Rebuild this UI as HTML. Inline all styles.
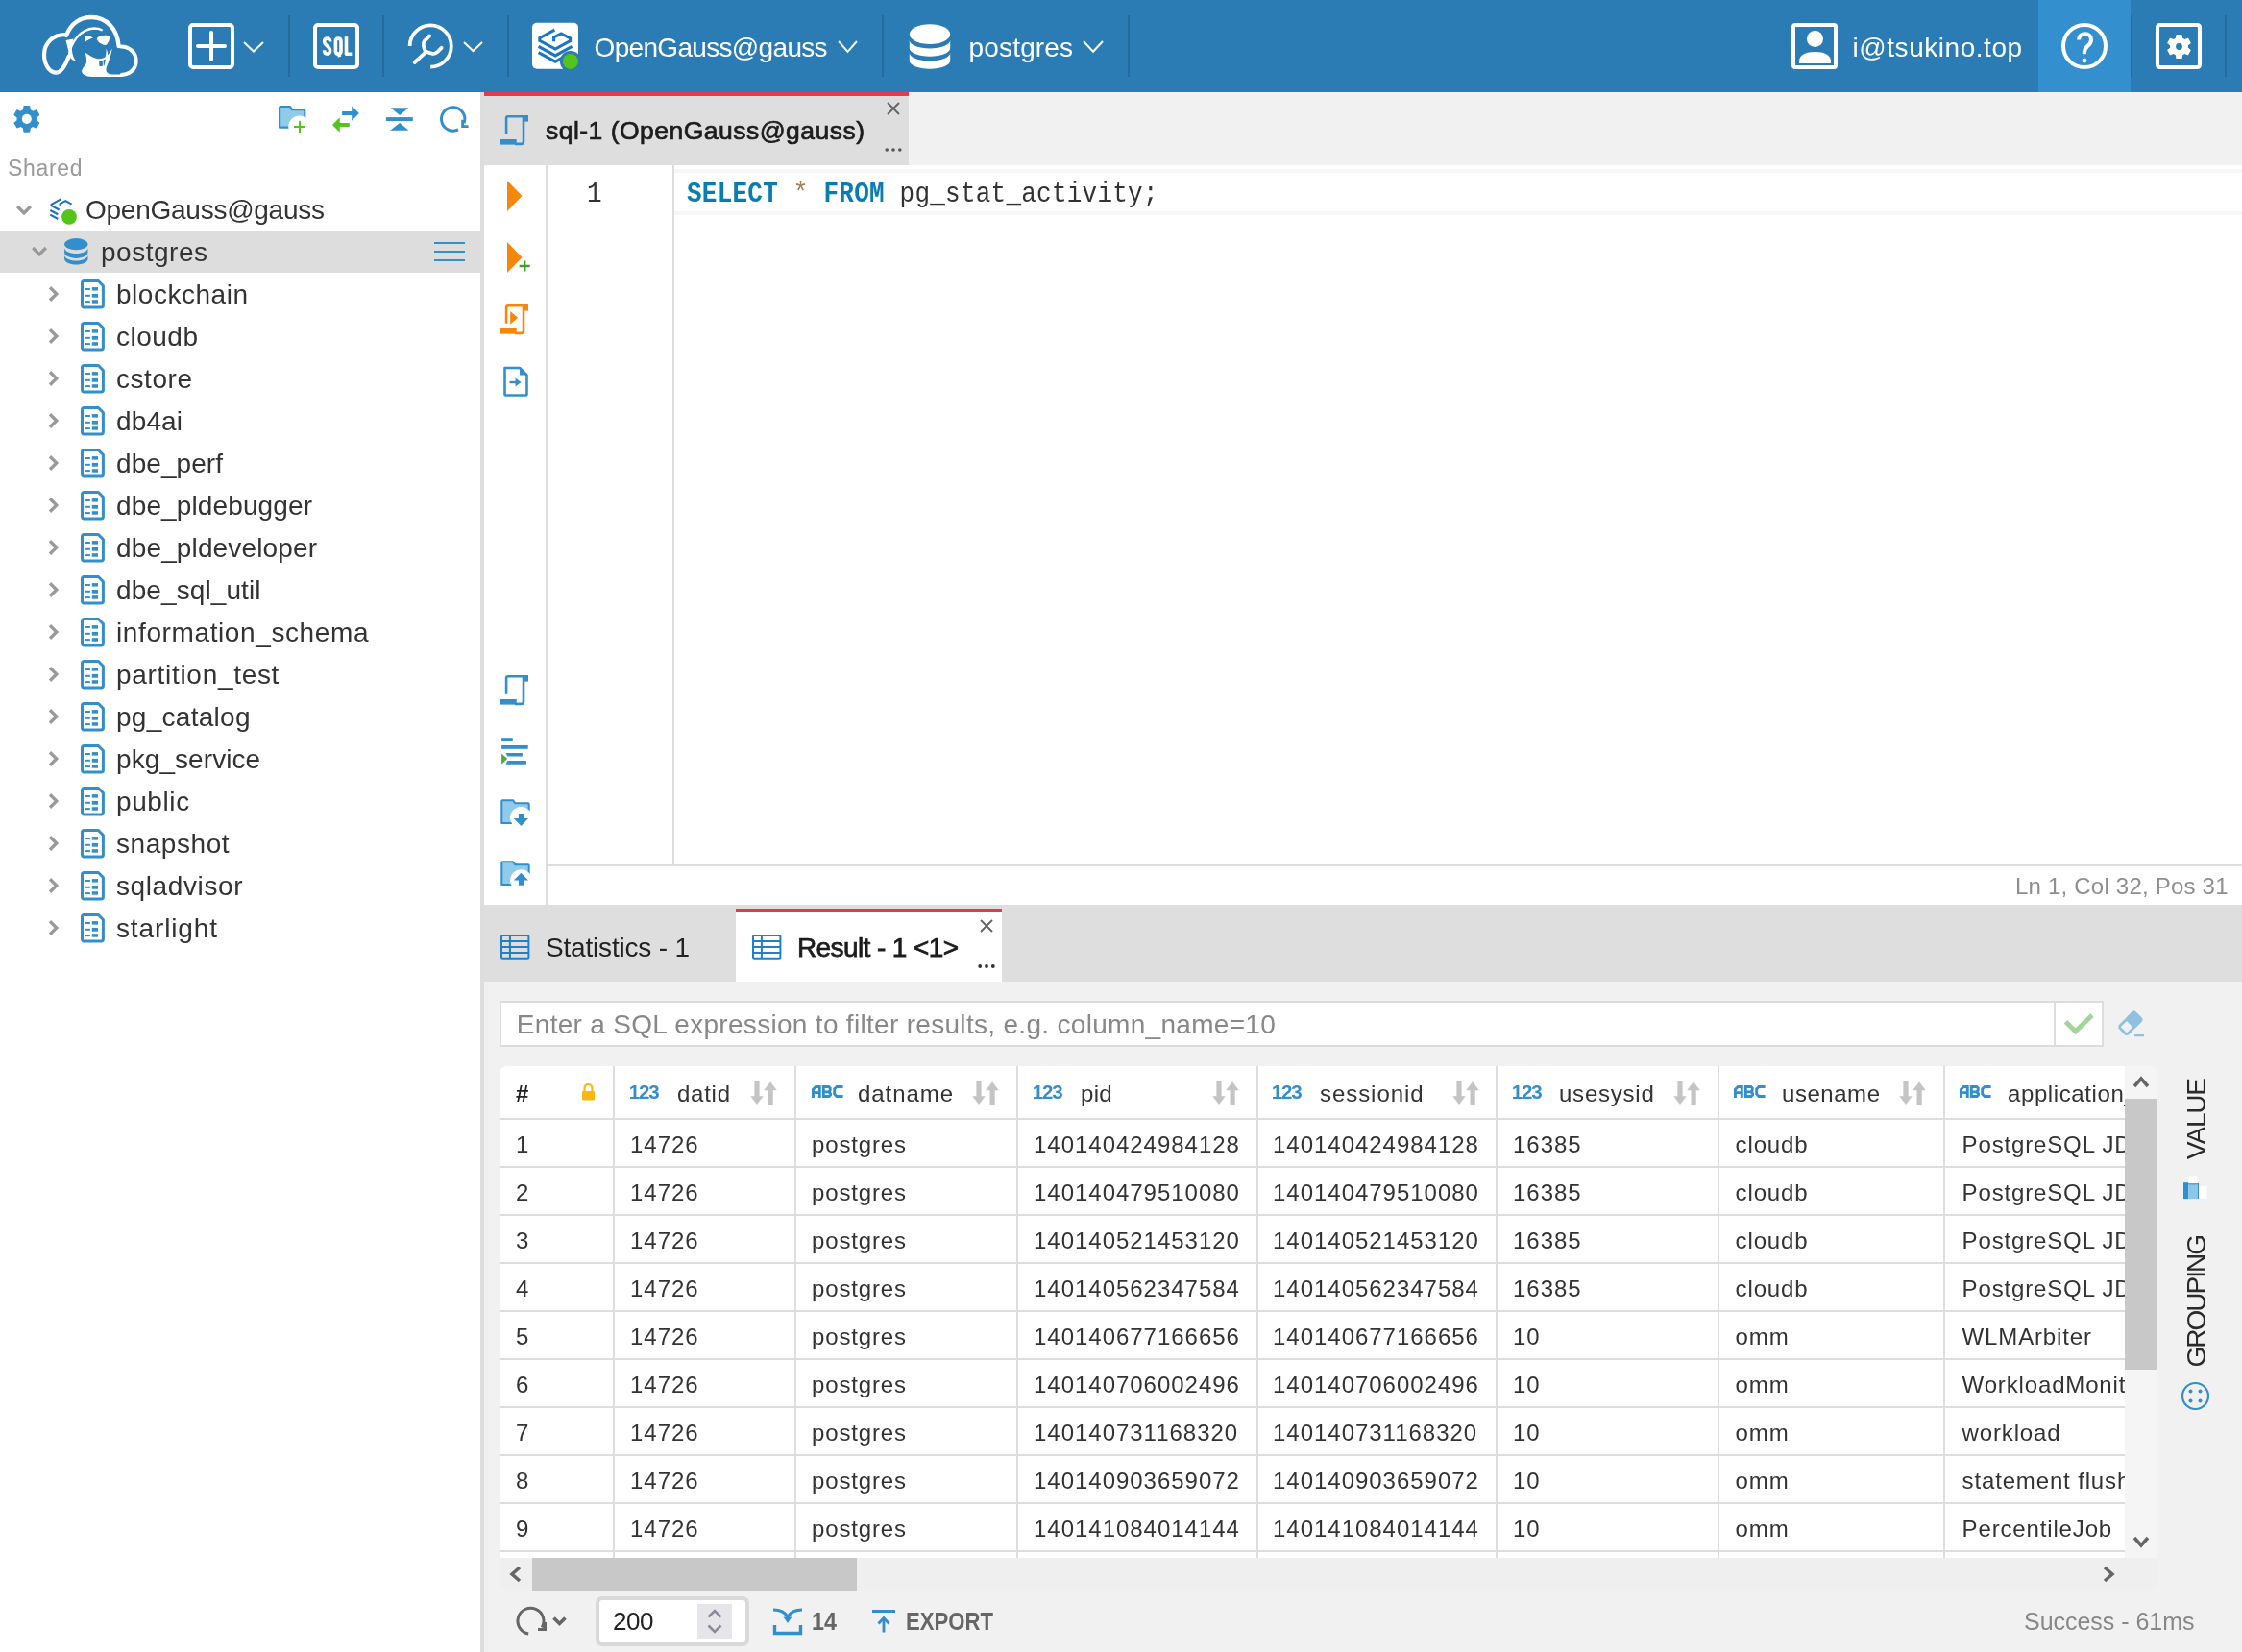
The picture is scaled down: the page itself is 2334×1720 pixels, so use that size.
<!DOCTYPE html>
<html><head><meta charset="utf-8"><style>
html,body{margin:0;padding:0;}
body{width:2334px;height:1720px;position:relative;overflow:hidden;background:#fff;font-family:"Liberation Sans",sans-serif;}
.a{position:absolute;}
.t{position:absolute;white-space:pre;line-height:1;}
.layer{position:absolute;left:0;top:0;width:2334px;height:1720px;will-change:transform;}
svg.a{overflow:visible;}
</style></head><body>
<div class="a" style="left:0px;top:0px;width:2334px;height:96px;background:#2b7bb5;"></div>
<div class="a" style="left:2122px;top:0px;width:96px;height:96px;background:#338fcd;"></div>
<div class="a" style="left:300px;top:16px;width:2px;height:64px;background:#236a9e;"></div>
<div class="a" style="left:398px;top:16px;width:2px;height:64px;background:#236a9e;"></div>
<div class="a" style="left:528px;top:16px;width:2px;height:64px;background:#236a9e;"></div>
<div class="a" style="left:918px;top:16px;width:2px;height:64px;background:#236a9e;"></div>
<div class="a" style="left:1174px;top:16px;width:2px;height:64px;background:#236a9e;"></div>
<div class="a" style="left:2218px;top:16px;width:2px;height:64px;background:#236a9e;"></div>
<div class="a" style="left:2316px;top:16px;width:2px;height:64px;background:#236a9e;"></div>
<svg class="a" style="left:40px;top:12px;" width="110" height="72" viewBox="40 12 110 72">
<g fill="none" stroke="#ffffff" stroke-linecap="round">
<path d="M 69 37 C 74 24, 84 18, 95.4 18 C 110 18, 122 29, 123.6 48" stroke-width="4.3"/>
<path d="M 68 36.2 C 55 36, 46 45, 46 57 C 46 68, 52 75.6, 58.6 75.6 C 64 75.6, 68 68, 71.5 59" stroke-width="4.2"/>
<path d="M 126 48.5 C 135 48.5, 141.7 55, 141.7 63.5 C 141.7 72, 135 77.7, 127 77.7" stroke-width="4"/>
<path d="M 71.5 60 C 73 44, 84 30, 98 29.5 C 101 29.5, 104 30, 105.8 31.2" stroke-width="2.4"/>
</g>
<g fill="#ffffff">
<path d="M 68.5 42 L 76.5 40.6 C 74 48, 74 58, 79.5 64 C 75 63, 72 60, 71.8 55 Z"/>
<path d="M 100.8 40 C 103 36.5, 110 36.4, 114.6 37.3 C 114.5 41, 112 47, 109.5 47 C 105 46.5, 101 43, 100.8 40 Z"/>
<path d="M 88.3 38 C 90 36.5, 93 37, 97 39.6 C 94 40.5, 91 42, 88.3 44 Z"/>
<path d="M 88 54.2 C 95 59, 100 61.5, 104 61.2 C 110 60.5, 113.5 57, 116.8 50.5 C 115 60, 112 67, 110.5 71 C 110 76, 113 77.5, 118 77.5 L 128 77.5 L 128 80 L 96 80 C 89 80, 84.6 77, 85.2 73.5 C 85.5 71, 89 68, 90 65.5 C 90.5 61, 89.5 57, 88 54.2 Z"/>
</g>
<path d="M 110.5 50.8 C 111.8 53, 112.4 56, 112 58.5 C 111.5 60, 110.5 61, 109 61.5 C 110.3 58, 110.8 54, 110.5 50.8 Z" fill="#ffffff"/>
<g fill="#2b7bb5"><path d="M 103.2 63 L 106.8 63 L 106.8 68.5 C 106 69.5, 104 69.5, 103.4 68.5 Z"/><path d="M 107.5 62.5 L 110 61.5 L 108.5 68.5 L 107.8 68.5 Z"/></g>
</svg>
<svg class="a" style="left:196px;top:24px;" width="48" height="48" viewBox="0 0 48 48"><rect x="2" y="2" width="44" height="44" rx="3" fill="none" stroke="#ffffff" stroke-width="4"/>
<path d="M 10 24 L 38 24 M 24 10 L 24 38" stroke="#ffffff" stroke-width="4" stroke-linecap="round"/></svg>
<svg class="a" style="left:252px;top:41.8px;" width="24" height="13.5" viewBox="0 0 24 13.5"><path d="M 2 2 L 12.0 11.5 L 22 2" fill="none" stroke="#ffffff" stroke-width="2"/></svg>
<svg class="a" style="left:326px;top:24px;" width="48" height="48" viewBox="0 0 48 48"><rect x="2" y="2" width="44" height="44" rx="3" fill="none" stroke="#ffffff" stroke-width="4"/></svg>
<svg class="a" style="left:326px;top:24px;" width="48" height="48" viewBox="0 0 48 48"><g fill="none" stroke="#ffffff" stroke-width="3.6" stroke-linecap="butt" stroke-linejoin="round">
<path d="M 17.6 19.5 L 17.6 18.8 C 17.6 17, 16.4 16.1, 14.6 16.1 C 12.8 16.1, 11.6 17.1, 11.6 19 C 11.6 21.6, 13 22.6, 14.8 24 C 16.6 25.5, 17.6 26.6, 17.6 29.1 C 17.6 31, 16.4 32.1, 14.6 32.1 C 12.8 32.1, 11.6 31.2, 11.6 29.2 L 11.6 28.2"/>
<path d="M 26.2 16.1 C 24.5 16.1, 23.4 17.2, 23.4 19 L 23.4 29.2 C 23.4 31, 24.5 32.1, 26.2 32.1 C 27.9 32.1, 29 31, 29 29.2 L 29 19 C 29 17.2, 27.9 16.1, 26.2 16.1 Z"/>
<path d="M 26.3 31 L 27.6 35.3"/>
<path d="M 34.5 14.2 L 34.5 32.2 L 40.3 32.2"/>
</g></svg>
<svg class="a" style="left:424px;top:24px;" width="48" height="48" viewBox="0 0 48 48"><path d="M 2.6 24 A 21.6 21.6 0 1 1 24.2 45.6" fill="none" stroke="#ffffff" stroke-width="3.8"/>
<path d="M 7.6 41 L 18.4 31.2 M 23.2 13.4 L 17.8 18.8 C 16.8 20, 16.5 21.5, 16.9 23.5 C 17.3 26, 17.8 28, 19 29.5 C 21 30.5, 24 31.3, 26.5 31.8 C 28.3 32, 30 31.5, 31.5 30 L 35.6 25.8" fill="none" stroke="#ffffff" stroke-width="3.8" stroke-linecap="round" stroke-linejoin="round"/></svg>
<svg class="a" style="left:480.5px;top:41.8px;" width="23.0" height="13.0" viewBox="0 0 23.0 13.0"><path d="M 2 2 L 11.5 11.0 L 21.0 2" fill="none" stroke="#ffffff" stroke-width="2"/></svg>
<svg class="a" style="left:554px;top:23px;" width="49" height="50" viewBox="0 0 49 50"><rect x="0" y="0.8" width="48" height="48" rx="5" fill="#ffffff"/>
<g fill="none" stroke="#1b76c6" stroke-width="3.1" stroke-linejoin="miter">
<path d="M 23.4 8.2 L 7.8 16.6 L 7.8 19.3 L 24.1 28 L 39.6 19.5 L 39.6 16.9 L 30.2 11.9 L 22.6 16 L 22.6 20.3"/>
<path d="M 6.6 25.4 L 24.1 34.9 L 41.5 25.4"/>
<path d="M 6.6 31.7 L 24.1 41.2 L 41.5 31.7"/>
</g>
<circle cx="39.9" cy="40.9" r="11" fill="#2b7bb5"/><circle cx="39.9" cy="40.9" r="8" fill="#52c41a"/></svg>
<svg class="a" style="left:871px;top:41.2px;" width="23" height="14.799999999999997" viewBox="0 0 23 14.799999999999997"><path d="M 2 2 L 11.5 12.799999999999997 L 21 2" fill="none" stroke="#ffffff" stroke-width="2"/></svg>
<svg class="a" style="left:945px;top:24px;" width="46" height="50" viewBox="0 0 46 50"><g fill="#ffffff">
<ellipse cx="23" cy="11.65" rx="21.2" ry="10.35"/>
<path d="M 1.8 18 C 1.8 22.69, 11.29 26.5, 23 26.5 C 34.71 26.5, 44.2 22.69, 44.2 18 L 44.2 26.3 C 44.2 30.99, 34.71 34.8, 23 34.8 C 11.29 34.8, 1.8 30.99, 1.8 26.3 Z"/>
<path d="M 1.8 31 C 1.8 35.69, 11.29 39.5, 23 39.5 C 34.71 39.5, 44.2 35.69, 44.2 31 L 44.2 39.3 C 44.2 43.99, 34.71 47.8, 23 47.8 C 11.29 47.8, 1.8 43.99, 1.8 39.3 Z"/>
</g></svg>
<svg class="a" style="left:1126px;top:41.2px;" width="24" height="14.799999999999997" viewBox="0 0 24 14.799999999999997"><path d="M 2 2 L 12.0 12.799999999999997 L 22 2" fill="none" stroke="#ffffff" stroke-width="2"/></svg>
<svg class="a" style="left:1865px;top:24px;" width="49" height="48" viewBox="0 0 49 48"><rect x="2" y="2" width="44" height="44" rx="2" fill="none" stroke="#ffffff" stroke-width="4"/>
<circle cx="24.5" cy="16.5" r="8.5" fill="#ffffff"/>
<path d="M 8 42 L 8 40 C 8 33, 15 30, 24.5 30 C 34 30, 41 33, 41 40 L 41 42 Z" fill="#ffffff"/></svg>
<svg class="a" style="left:2146px;top:24px;" width="49" height="48" viewBox="0 0 49 48"><circle cx="24" cy="24" r="22" fill="none" stroke="#ffffff" stroke-width="4"/>
<path d="M 18.1 17.6 C 18.1 13.8, 20.8 11.3, 24.6 11.3 C 28.3 11.3, 31 13.8, 31 17.4 C 31 20.6, 29 22.2, 27.2 24 C 25.3 25.8, 23.9 27.5, 23.9 30.5 L 23.9 32.2" fill="none" stroke="#ffffff" stroke-width="4.1"/>
<circle cx="23.9" cy="39" r="2.4" fill="#ffffff"/></svg>
<svg class="a" style="left:2244px;top:24px;" width="49" height="49" viewBox="0 0 49 49"><rect x="2" y="2" width="44" height="44" rx="2.5" fill="none" stroke="#ffffff" stroke-width="4.1"/>
<g transform="translate(8.75 8.75) scale(1.3125)"><path d="M19.14,12.94c0.04-0.3,0.06-0.61,0.06-0.94c0-0.32-0.02-0.64-0.07-0.94l2.03-1.58c0.18-0.14,0.23-0.41,0.12-0.61 l-1.92-3.32c-0.12-0.22-0.37-0.29-0.59-0.22l-2.39,0.96c-0.5-0.38-1.03-0.7-1.62-0.94L14.4,2.81c-0.04-0.24-0.24-0.41-0.48-0.41 h-3.84c-0.24,0-0.43,0.17-0.47,0.41L9.25,5.35C8.66,5.59,8.12,5.92,7.630,6.29L5.24,5.33c-0.22-0.08-0.47,0-0.59,0.22L2.74,8.87 C2.62,9.08,2.66,9.34,2.86,9.48l2.03,1.58C4.84,11.36,4.8,11.690,4.8,12s0.02,0.64,0.07,0.94l-2.03,1.58 c-0.18,0.14-0.23,0.41-0.12,0.61l1.92,3.32c0.12,0.22,0.37,0.29,0.59,0.22l2.39-0.96c0.5,0.38,1.03,0.7,1.62,0.94l0.36,2.54 c0.05,0.24,0.24,0.41,0.48,0.41h3.84c0.24,0,0.44-0.17,0.47-0.41l0.36-2.54c0.59-0.24,1.13-0.56,1.62-0.94l2.39,0.96 c0.22,0.08,0.47,0,0.59-0.22l1.92-3.32c0.12-0.22,0.07-0.47-0.12-0.61L19.14,12.94z" fill="#ffffff"/><circle cx="12" cy="12" r="2.6" fill="#2b7bb5"/></g></svg>
<div class="a" style="left:500px;top:96px;width:4px;height:1624px;background:#dddddd;"></div>
<svg class="a" style="left:8px;top:104px;" width="40" height="40" viewBox="0 0 40 40"><g transform="translate(2.6 2.6) scale(1.4375)"><path d="M19.14,12.94c0.04-0.3,0.06-0.61,0.06-0.94c0-0.32-0.02-0.64-0.07-0.94l2.03-1.58c0.18-0.14,0.23-0.41,0.12-0.61 l-1.92-3.32c-0.12-0.22-0.37-0.29-0.59-0.22l-2.39,0.96c-0.5-0.38-1.03-0.7-1.62-0.94L14.4,2.81c-0.04-0.24-0.24-0.41-0.48-0.41 h-3.84c-0.24,0-0.43,0.17-0.47,0.41L9.25,5.35C8.66,5.59,8.12,5.92,7.630,6.29L5.24,5.33c-0.22-0.08-0.47,0-0.59,0.22L2.74,8.87 C2.62,9.08,2.66,9.34,2.86,9.48l2.03,1.58C4.84,11.36,4.8,11.690,4.8,12s0.02,0.64,0.07,0.94l-2.03,1.58 c-0.18,0.14-0.23,0.41-0.12,0.61l1.92,3.32c0.12,0.22,0.37,0.29,0.59,0.22l2.39-0.96c0.5,0.38,1.03,0.7,1.62,0.94l0.36,2.54 c0.05,0.24,0.24,0.41,0.48,0.41h3.84c0.24,0,0.44-0.17,0.47-0.41l0.36-2.54c0.59-0.24,1.13-0.56,1.62-0.94l2.39,0.96 c0.22,0.08,0.47,0,0.59-0.22l1.92-3.32c0.12-0.22,0.07-0.47-0.12-0.61L19.14,12.94z" fill="#338ecc"/><circle cx="12" cy="12" r="3.5" fill="#fff"/></g></svg>
<svg class="a" style="left:289px;top:110px;" width="32" height="30" viewBox="0 0 32 30"><path d="M 2.1 2 C 2.1 1.4, 2.5 1, 3.1 1 L 13 1 L 15 4.2 L 27.3 4.2 C 27.8 4.2, 28.3 4.6, 28.3 5.2 L 28.3 22.7 L 2.1 22.7 Z" fill="#8fcbeb" stroke="#338ecc" stroke-width="2.2" stroke-linejoin="round"/>
<circle cx="22.8" cy="22" r="11.5" fill="#fff"/>
<path d="M 23 16 L 23 28 M 17 22 L 29 22" stroke="#52c41a" stroke-width="2"/></svg>
<svg class="a" style="left:345px;top:110px;" width="30" height="30" viewBox="0 0 30 30"><path d="M 11.1 6 L 21.7 6 L 21.7 9.9 L 11.1 9.9 Z M 21.2 0.3 L 28.9 8 L 21.2 15.7 Z" fill="#338ecc"/>
<path d="M 8.2 18 L 18.8 18 L 18.8 22 L 8.2 22 Z M 1 20 L 8.7 12.3 L 8.7 27.7 Z" fill="#52c41a"/></svg>
<svg class="a" style="left:401px;top:111px;" width="30" height="26" viewBox="0 0 30 26"><path d="M 5.7 1.2 L 24.5 1.2 L 15.1 8.9 Z M 5.2 24.8 L 24.5 24.8 L 15.1 16.9 Z" fill="#338ecc"/><rect x="0.9" y="11.1" width="27.9" height="3.9" fill="#338ecc"/></svg>
<svg class="a" style="left:457px;top:110px;" width="32" height="30" viewBox="0 0 32 30"><path d="M 20.05 24.97 A 12.2 12.2 0 1 1 26.16 18.17" fill="none" stroke="#338ecc" stroke-width="3"/><path d="M 24.6 14.7 L 24.6 21.7 L 30.6 21.7" fill="none" stroke="#338ecc" stroke-width="2.8"/></svg>
<svg class="a" style="left:15.5px;top:212px;" width="18" height="14" viewBox="0 0 18 14"><path d="M 2.2 3 L 9 9.8 L 15.8 3" fill="none" stroke="#999" stroke-width="3.3"/></svg>
<svg class="a" style="left:51px;top:205px;" width="30" height="30" viewBox="0 0 30 30"><g fill="none" stroke="#1d72c2" stroke-width="2.1" stroke-linejoin="miter">
<path d="M 12.4 2.3 L 2.5 7.8 L 2.5 9.2 L 10.6 13.5"/><path d="M 11.6 10 L 11.6 7.2 L 17.3 4.1 L 23.6 7.6"/>
<path d="M 1.3 14 L 9.4 18.3"/><path d="M 1.3 18.7 L 9.3 23"/></g>
<circle cx="21" cy="20.9" r="7.9" fill="#52c41a"/></svg>
<div class="a" style="left:0px;top:240px;width:500px;height:44px;background:#dddddd;"></div>
<svg class="a" style="left:31.5px;top:255px;" width="18" height="14" viewBox="0 0 18 14"><path d="M 2.2 3 L 9 9.8 L 15.8 3" fill="none" stroke="#999" stroke-width="3.3"/></svg>
<svg class="a" style="left:66.5px;top:247.5px;" width="25" height="28" viewBox="0 0 25 28"><g fill="#338ecc">
<ellipse cx="12.3" cy="6.2" rx="12.2" ry="6.1"/>
<path d="M 0.10000000000000142 10 C 0.10000000000000142 13.37, 5.56 16.1, 12.3 16.1 C 19.04 16.1, 24.5 13.37, 24.5 10 L 24.5 14.8 C 24.5 18.17, 19.04 20.9, 12.3 20.9 C 5.56 20.9, 0.10000000000000142 18.17, 0.10000000000000142 14.8 Z"/>
<path d="M 0.10000000000000142 17.5 C 0.10000000000000142 20.87, 5.56 23.6, 12.3 23.6 C 19.04 23.6, 24.5 20.87, 24.5 17.5 L 24.5 21.5 C 24.5 24.87, 19.04 27.6, 12.3 27.6 C 5.56 27.6, 0.10000000000000142 24.87, 0.10000000000000142 21.5 Z"/>
</g></svg>
<svg class="a" style="left:452px;top:251px;" width="33" height="22" viewBox="0 0 33 22"><path d="M 0 2 L 32 2 M 0 11 L 32 11 M 0 20 L 32 20" stroke="#338ecc" stroke-width="2.2"/></svg>
<svg class="a" style="left:50px;top:296.5px;" width="12" height="18" viewBox="0 0 12 18"><path d="M 2 2.3 L 8.8 9 L 2 15.7" fill="none" stroke="#999" stroke-width="3.3"/></svg>
<svg class="a" style="left:84px;top:291px;" width="26" height="31" viewBox="0 0 26 31"><path d="M 3.4 1.5 L 18.4 1.5 L 23.4 6.5 L 23.4 27 C 23.4 28.1, 22.6 28.9, 21.5 28.9 L 3.4 28.9 C 2.3 28.9, 1.5 28.1, 1.5 27 L 1.5 3.4 C 1.5 2.3, 2.3 1.5, 3.4 1.5 Z" fill="none" stroke="#338ecc" stroke-width="3" stroke-linejoin="round"/>
<g fill="#338ecc"><rect x="5" y="9" width="4.9" height="2"/><rect x="11.8" y="8.1" width="6.2" height="3.5"/>
<rect x="5" y="15.8" width="4.9" height="2"/><rect x="11.8" y="14.9" width="6.2" height="3.8"/>
<rect x="5" y="22.1" width="4.9" height="2"/><rect x="11.8" y="21.2" width="6.2" height="3.5"/></g></svg>
<svg class="a" style="left:50px;top:340.5px;" width="12" height="18" viewBox="0 0 12 18"><path d="M 2 2.3 L 8.8 9 L 2 15.7" fill="none" stroke="#999" stroke-width="3.3"/></svg>
<svg class="a" style="left:84px;top:335px;" width="26" height="31" viewBox="0 0 26 31"><path d="M 3.4 1.5 L 18.4 1.5 L 23.4 6.5 L 23.4 27 C 23.4 28.1, 22.6 28.9, 21.5 28.9 L 3.4 28.9 C 2.3 28.9, 1.5 28.1, 1.5 27 L 1.5 3.4 C 1.5 2.3, 2.3 1.5, 3.4 1.5 Z" fill="none" stroke="#338ecc" stroke-width="3" stroke-linejoin="round"/>
<g fill="#338ecc"><rect x="5" y="9" width="4.9" height="2"/><rect x="11.8" y="8.1" width="6.2" height="3.5"/>
<rect x="5" y="15.8" width="4.9" height="2"/><rect x="11.8" y="14.9" width="6.2" height="3.8"/>
<rect x="5" y="22.1" width="4.9" height="2"/><rect x="11.8" y="21.2" width="6.2" height="3.5"/></g></svg>
<svg class="a" style="left:50px;top:384.5px;" width="12" height="18" viewBox="0 0 12 18"><path d="M 2 2.3 L 8.8 9 L 2 15.7" fill="none" stroke="#999" stroke-width="3.3"/></svg>
<svg class="a" style="left:84px;top:379px;" width="26" height="31" viewBox="0 0 26 31"><path d="M 3.4 1.5 L 18.4 1.5 L 23.4 6.5 L 23.4 27 C 23.4 28.1, 22.6 28.9, 21.5 28.9 L 3.4 28.9 C 2.3 28.9, 1.5 28.1, 1.5 27 L 1.5 3.4 C 1.5 2.3, 2.3 1.5, 3.4 1.5 Z" fill="none" stroke="#338ecc" stroke-width="3" stroke-linejoin="round"/>
<g fill="#338ecc"><rect x="5" y="9" width="4.9" height="2"/><rect x="11.8" y="8.1" width="6.2" height="3.5"/>
<rect x="5" y="15.8" width="4.9" height="2"/><rect x="11.8" y="14.9" width="6.2" height="3.8"/>
<rect x="5" y="22.1" width="4.9" height="2"/><rect x="11.8" y="21.2" width="6.2" height="3.5"/></g></svg>
<svg class="a" style="left:50px;top:428.5px;" width="12" height="18" viewBox="0 0 12 18"><path d="M 2 2.3 L 8.8 9 L 2 15.7" fill="none" stroke="#999" stroke-width="3.3"/></svg>
<svg class="a" style="left:84px;top:423px;" width="26" height="31" viewBox="0 0 26 31"><path d="M 3.4 1.5 L 18.4 1.5 L 23.4 6.5 L 23.4 27 C 23.4 28.1, 22.6 28.9, 21.5 28.9 L 3.4 28.9 C 2.3 28.9, 1.5 28.1, 1.5 27 L 1.5 3.4 C 1.5 2.3, 2.3 1.5, 3.4 1.5 Z" fill="none" stroke="#338ecc" stroke-width="3" stroke-linejoin="round"/>
<g fill="#338ecc"><rect x="5" y="9" width="4.9" height="2"/><rect x="11.8" y="8.1" width="6.2" height="3.5"/>
<rect x="5" y="15.8" width="4.9" height="2"/><rect x="11.8" y="14.9" width="6.2" height="3.8"/>
<rect x="5" y="22.1" width="4.9" height="2"/><rect x="11.8" y="21.2" width="6.2" height="3.5"/></g></svg>
<svg class="a" style="left:50px;top:472.5px;" width="12" height="18" viewBox="0 0 12 18"><path d="M 2 2.3 L 8.8 9 L 2 15.7" fill="none" stroke="#999" stroke-width="3.3"/></svg>
<svg class="a" style="left:84px;top:467px;" width="26" height="31" viewBox="0 0 26 31"><path d="M 3.4 1.5 L 18.4 1.5 L 23.4 6.5 L 23.4 27 C 23.4 28.1, 22.6 28.9, 21.5 28.9 L 3.4 28.9 C 2.3 28.9, 1.5 28.1, 1.5 27 L 1.5 3.4 C 1.5 2.3, 2.3 1.5, 3.4 1.5 Z" fill="none" stroke="#338ecc" stroke-width="3" stroke-linejoin="round"/>
<g fill="#338ecc"><rect x="5" y="9" width="4.9" height="2"/><rect x="11.8" y="8.1" width="6.2" height="3.5"/>
<rect x="5" y="15.8" width="4.9" height="2"/><rect x="11.8" y="14.9" width="6.2" height="3.8"/>
<rect x="5" y="22.1" width="4.9" height="2"/><rect x="11.8" y="21.2" width="6.2" height="3.5"/></g></svg>
<svg class="a" style="left:50px;top:516.5px;" width="12" height="18" viewBox="0 0 12 18"><path d="M 2 2.3 L 8.8 9 L 2 15.7" fill="none" stroke="#999" stroke-width="3.3"/></svg>
<svg class="a" style="left:84px;top:511px;" width="26" height="31" viewBox="0 0 26 31"><path d="M 3.4 1.5 L 18.4 1.5 L 23.4 6.5 L 23.4 27 C 23.4 28.1, 22.6 28.9, 21.5 28.9 L 3.4 28.9 C 2.3 28.9, 1.5 28.1, 1.5 27 L 1.5 3.4 C 1.5 2.3, 2.3 1.5, 3.4 1.5 Z" fill="none" stroke="#338ecc" stroke-width="3" stroke-linejoin="round"/>
<g fill="#338ecc"><rect x="5" y="9" width="4.9" height="2"/><rect x="11.8" y="8.1" width="6.2" height="3.5"/>
<rect x="5" y="15.8" width="4.9" height="2"/><rect x="11.8" y="14.9" width="6.2" height="3.8"/>
<rect x="5" y="22.1" width="4.9" height="2"/><rect x="11.8" y="21.2" width="6.2" height="3.5"/></g></svg>
<svg class="a" style="left:50px;top:560.5px;" width="12" height="18" viewBox="0 0 12 18"><path d="M 2 2.3 L 8.8 9 L 2 15.7" fill="none" stroke="#999" stroke-width="3.3"/></svg>
<svg class="a" style="left:84px;top:555px;" width="26" height="31" viewBox="0 0 26 31"><path d="M 3.4 1.5 L 18.4 1.5 L 23.4 6.5 L 23.4 27 C 23.4 28.1, 22.6 28.9, 21.5 28.9 L 3.4 28.9 C 2.3 28.9, 1.5 28.1, 1.5 27 L 1.5 3.4 C 1.5 2.3, 2.3 1.5, 3.4 1.5 Z" fill="none" stroke="#338ecc" stroke-width="3" stroke-linejoin="round"/>
<g fill="#338ecc"><rect x="5" y="9" width="4.9" height="2"/><rect x="11.8" y="8.1" width="6.2" height="3.5"/>
<rect x="5" y="15.8" width="4.9" height="2"/><rect x="11.8" y="14.9" width="6.2" height="3.8"/>
<rect x="5" y="22.1" width="4.9" height="2"/><rect x="11.8" y="21.2" width="6.2" height="3.5"/></g></svg>
<svg class="a" style="left:50px;top:604.5px;" width="12" height="18" viewBox="0 0 12 18"><path d="M 2 2.3 L 8.8 9 L 2 15.7" fill="none" stroke="#999" stroke-width="3.3"/></svg>
<svg class="a" style="left:84px;top:599px;" width="26" height="31" viewBox="0 0 26 31"><path d="M 3.4 1.5 L 18.4 1.5 L 23.4 6.5 L 23.4 27 C 23.4 28.1, 22.6 28.9, 21.5 28.9 L 3.4 28.9 C 2.3 28.9, 1.5 28.1, 1.5 27 L 1.5 3.4 C 1.5 2.3, 2.3 1.5, 3.4 1.5 Z" fill="none" stroke="#338ecc" stroke-width="3" stroke-linejoin="round"/>
<g fill="#338ecc"><rect x="5" y="9" width="4.9" height="2"/><rect x="11.8" y="8.1" width="6.2" height="3.5"/>
<rect x="5" y="15.8" width="4.9" height="2"/><rect x="11.8" y="14.9" width="6.2" height="3.8"/>
<rect x="5" y="22.1" width="4.9" height="2"/><rect x="11.8" y="21.2" width="6.2" height="3.5"/></g></svg>
<svg class="a" style="left:50px;top:648.5px;" width="12" height="18" viewBox="0 0 12 18"><path d="M 2 2.3 L 8.8 9 L 2 15.7" fill="none" stroke="#999" stroke-width="3.3"/></svg>
<svg class="a" style="left:84px;top:643px;" width="26" height="31" viewBox="0 0 26 31"><path d="M 3.4 1.5 L 18.4 1.5 L 23.4 6.5 L 23.4 27 C 23.4 28.1, 22.6 28.9, 21.5 28.9 L 3.4 28.9 C 2.3 28.9, 1.5 28.1, 1.5 27 L 1.5 3.4 C 1.5 2.3, 2.3 1.5, 3.4 1.5 Z" fill="none" stroke="#338ecc" stroke-width="3" stroke-linejoin="round"/>
<g fill="#338ecc"><rect x="5" y="9" width="4.9" height="2"/><rect x="11.8" y="8.1" width="6.2" height="3.5"/>
<rect x="5" y="15.8" width="4.9" height="2"/><rect x="11.8" y="14.9" width="6.2" height="3.8"/>
<rect x="5" y="22.1" width="4.9" height="2"/><rect x="11.8" y="21.2" width="6.2" height="3.5"/></g></svg>
<svg class="a" style="left:50px;top:692.5px;" width="12" height="18" viewBox="0 0 12 18"><path d="M 2 2.3 L 8.8 9 L 2 15.7" fill="none" stroke="#999" stroke-width="3.3"/></svg>
<svg class="a" style="left:84px;top:687px;" width="26" height="31" viewBox="0 0 26 31"><path d="M 3.4 1.5 L 18.4 1.5 L 23.4 6.5 L 23.4 27 C 23.4 28.1, 22.6 28.9, 21.5 28.9 L 3.4 28.9 C 2.3 28.9, 1.5 28.1, 1.5 27 L 1.5 3.4 C 1.5 2.3, 2.3 1.5, 3.4 1.5 Z" fill="none" stroke="#338ecc" stroke-width="3" stroke-linejoin="round"/>
<g fill="#338ecc"><rect x="5" y="9" width="4.9" height="2"/><rect x="11.8" y="8.1" width="6.2" height="3.5"/>
<rect x="5" y="15.8" width="4.9" height="2"/><rect x="11.8" y="14.9" width="6.2" height="3.8"/>
<rect x="5" y="22.1" width="4.9" height="2"/><rect x="11.8" y="21.2" width="6.2" height="3.5"/></g></svg>
<svg class="a" style="left:50px;top:736.5px;" width="12" height="18" viewBox="0 0 12 18"><path d="M 2 2.3 L 8.8 9 L 2 15.7" fill="none" stroke="#999" stroke-width="3.3"/></svg>
<svg class="a" style="left:84px;top:731px;" width="26" height="31" viewBox="0 0 26 31"><path d="M 3.4 1.5 L 18.4 1.5 L 23.4 6.5 L 23.4 27 C 23.4 28.1, 22.6 28.9, 21.5 28.9 L 3.4 28.9 C 2.3 28.9, 1.5 28.1, 1.5 27 L 1.5 3.4 C 1.5 2.3, 2.3 1.5, 3.4 1.5 Z" fill="none" stroke="#338ecc" stroke-width="3" stroke-linejoin="round"/>
<g fill="#338ecc"><rect x="5" y="9" width="4.9" height="2"/><rect x="11.8" y="8.1" width="6.2" height="3.5"/>
<rect x="5" y="15.8" width="4.9" height="2"/><rect x="11.8" y="14.9" width="6.2" height="3.8"/>
<rect x="5" y="22.1" width="4.9" height="2"/><rect x="11.8" y="21.2" width="6.2" height="3.5"/></g></svg>
<svg class="a" style="left:50px;top:780.5px;" width="12" height="18" viewBox="0 0 12 18"><path d="M 2 2.3 L 8.8 9 L 2 15.7" fill="none" stroke="#999" stroke-width="3.3"/></svg>
<svg class="a" style="left:84px;top:775px;" width="26" height="31" viewBox="0 0 26 31"><path d="M 3.4 1.5 L 18.4 1.5 L 23.4 6.5 L 23.4 27 C 23.4 28.1, 22.6 28.9, 21.5 28.9 L 3.4 28.9 C 2.3 28.9, 1.5 28.1, 1.5 27 L 1.5 3.4 C 1.5 2.3, 2.3 1.5, 3.4 1.5 Z" fill="none" stroke="#338ecc" stroke-width="3" stroke-linejoin="round"/>
<g fill="#338ecc"><rect x="5" y="9" width="4.9" height="2"/><rect x="11.8" y="8.1" width="6.2" height="3.5"/>
<rect x="5" y="15.8" width="4.9" height="2"/><rect x="11.8" y="14.9" width="6.2" height="3.8"/>
<rect x="5" y="22.1" width="4.9" height="2"/><rect x="11.8" y="21.2" width="6.2" height="3.5"/></g></svg>
<svg class="a" style="left:50px;top:824.5px;" width="12" height="18" viewBox="0 0 12 18"><path d="M 2 2.3 L 8.8 9 L 2 15.7" fill="none" stroke="#999" stroke-width="3.3"/></svg>
<svg class="a" style="left:84px;top:819px;" width="26" height="31" viewBox="0 0 26 31"><path d="M 3.4 1.5 L 18.4 1.5 L 23.4 6.5 L 23.4 27 C 23.4 28.1, 22.6 28.9, 21.5 28.9 L 3.4 28.9 C 2.3 28.9, 1.5 28.1, 1.5 27 L 1.5 3.4 C 1.5 2.3, 2.3 1.5, 3.4 1.5 Z" fill="none" stroke="#338ecc" stroke-width="3" stroke-linejoin="round"/>
<g fill="#338ecc"><rect x="5" y="9" width="4.9" height="2"/><rect x="11.8" y="8.1" width="6.2" height="3.5"/>
<rect x="5" y="15.8" width="4.9" height="2"/><rect x="11.8" y="14.9" width="6.2" height="3.8"/>
<rect x="5" y="22.1" width="4.9" height="2"/><rect x="11.8" y="21.2" width="6.2" height="3.5"/></g></svg>
<svg class="a" style="left:50px;top:868.5px;" width="12" height="18" viewBox="0 0 12 18"><path d="M 2 2.3 L 8.8 9 L 2 15.7" fill="none" stroke="#999" stroke-width="3.3"/></svg>
<svg class="a" style="left:84px;top:863px;" width="26" height="31" viewBox="0 0 26 31"><path d="M 3.4 1.5 L 18.4 1.5 L 23.4 6.5 L 23.4 27 C 23.4 28.1, 22.6 28.9, 21.5 28.9 L 3.4 28.9 C 2.3 28.9, 1.5 28.1, 1.5 27 L 1.5 3.4 C 1.5 2.3, 2.3 1.5, 3.4 1.5 Z" fill="none" stroke="#338ecc" stroke-width="3" stroke-linejoin="round"/>
<g fill="#338ecc"><rect x="5" y="9" width="4.9" height="2"/><rect x="11.8" y="8.1" width="6.2" height="3.5"/>
<rect x="5" y="15.8" width="4.9" height="2"/><rect x="11.8" y="14.9" width="6.2" height="3.8"/>
<rect x="5" y="22.1" width="4.9" height="2"/><rect x="11.8" y="21.2" width="6.2" height="3.5"/></g></svg>
<svg class="a" style="left:50px;top:912.5px;" width="12" height="18" viewBox="0 0 12 18"><path d="M 2 2.3 L 8.8 9 L 2 15.7" fill="none" stroke="#999" stroke-width="3.3"/></svg>
<svg class="a" style="left:84px;top:907px;" width="26" height="31" viewBox="0 0 26 31"><path d="M 3.4 1.5 L 18.4 1.5 L 23.4 6.5 L 23.4 27 C 23.4 28.1, 22.6 28.9, 21.5 28.9 L 3.4 28.9 C 2.3 28.9, 1.5 28.1, 1.5 27 L 1.5 3.4 C 1.5 2.3, 2.3 1.5, 3.4 1.5 Z" fill="none" stroke="#338ecc" stroke-width="3" stroke-linejoin="round"/>
<g fill="#338ecc"><rect x="5" y="9" width="4.9" height="2"/><rect x="11.8" y="8.1" width="6.2" height="3.5"/>
<rect x="5" y="15.8" width="4.9" height="2"/><rect x="11.8" y="14.9" width="6.2" height="3.8"/>
<rect x="5" y="22.1" width="4.9" height="2"/><rect x="11.8" y="21.2" width="6.2" height="3.5"/></g></svg>
<svg class="a" style="left:50px;top:956.5px;" width="12" height="18" viewBox="0 0 12 18"><path d="M 2 2.3 L 8.8 9 L 2 15.7" fill="none" stroke="#999" stroke-width="3.3"/></svg>
<svg class="a" style="left:84px;top:951px;" width="26" height="31" viewBox="0 0 26 31"><path d="M 3.4 1.5 L 18.4 1.5 L 23.4 6.5 L 23.4 27 C 23.4 28.1, 22.6 28.9, 21.5 28.9 L 3.4 28.9 C 2.3 28.9, 1.5 28.1, 1.5 27 L 1.5 3.4 C 1.5 2.3, 2.3 1.5, 3.4 1.5 Z" fill="none" stroke="#338ecc" stroke-width="3" stroke-linejoin="round"/>
<g fill="#338ecc"><rect x="5" y="9" width="4.9" height="2"/><rect x="11.8" y="8.1" width="6.2" height="3.5"/>
<rect x="5" y="15.8" width="4.9" height="2"/><rect x="11.8" y="14.9" width="6.2" height="3.8"/>
<rect x="5" y="22.1" width="4.9" height="2"/><rect x="11.8" y="21.2" width="6.2" height="3.5"/></g></svg>
<div class="a" style="left:504px;top:96px;width:1830px;height:76px;background:#f1f1f1;"></div>
<div class="a" style="left:504px;top:96px;width:442px;height:4px;background:#e6394f;"></div>
<div class="a" style="left:504px;top:100px;width:442px;height:72px;background:#dedede;"></div>
<svg class="a" style="left:520px;top:119px;" width="31" height="32" viewBox="0 0 31 32"><path d="M 7.1 20.7 L 7.1 4 C 7.1 2.9, 7.9 2.2, 9 2.2 L 25 2.2 L 25 28.6 C 25 29.9, 24 30.9, 22.7 30.9 L 16 30.9" fill="none" stroke="#338ecc" stroke-width="2.6" stroke-linejoin="round"/>
<rect x="24" y="1" width="6" height="6.6" fill="#338ecc"/><rect x="0.3" y="26" width="17.4" height="5.6" fill="#338ecc"/></svg>
<svg class="a" style="left:922px;top:105px;" width="16" height="16" viewBox="0 0 16 16"><path d="M 2 2 L 14 14 M 14 2 L 2 14" stroke="#666" stroke-width="2"/></svg>
<svg class="a" style="left:921px;top:154px;" width="18" height="4" viewBox="0 0 18 4"><g fill="#555"><circle cx="2.2" cy="2" r="1.8"/><circle cx="9" cy="2" r="1.8"/><circle cx="15.8" cy="2" r="1.8"/></g></svg>
<div class="a" style="left:504px;top:172px;width:1830px;height:770px;background:#ffffff;"></div>
<div class="a" style="left:568px;top:172px;width:2px;height:770px;background:#dddddd;"></div>
<div class="a" style="left:700px;top:172px;width:2px;height:729px;background:#dddddd;"></div>
<div class="a" style="left:569px;top:900px;width:1765px;height:2px;background:#dddddd;"></div>
<div class="a" style="left:702px;top:176px;width:1632px;height:4px;background:#f7f7f7;"></div>
<div class="a" style="left:702px;top:220px;width:1632px;height:4px;background:#f7f7f7;"></div>
<svg class="a" style="left:527px;top:187px;" width="18" height="34" viewBox="0 0 18 34"><path d="M 1 1 L 16.5 17 L 1 33 Z" fill="#f5870a"/></svg>
<svg class="a" style="left:527px;top:251px;" width="28" height="34" viewBox="0 0 28 34"><path d="M 1 1 L 16.5 17 L 1 33 Z" fill="#f5870a"/><path d="M 19.2 20.5 L 19.2 31.5 M 13.7 26 L 24.7 26" stroke="#3fa02b" stroke-width="2.4"/></svg>
<svg class="a" style="left:520px;top:316px;" width="31" height="32" viewBox="0 0 31 32"><path d="M 7.1 20.7 L 7.1 4 C 7.1 2.9, 7.9 2.2, 9 2.2 L 25 2.2 L 25 28.6 C 25 29.9, 24 30.9, 22.7 30.9 L 16 30.9" fill="none" stroke="#f5870a" stroke-width="2.6" stroke-linejoin="round"/>
<rect x="24" y="1" width="6" height="6.6" fill="#f5870a"/><rect x="0.3" y="26" width="17.4" height="5.6" fill="#f5870a"/><path d="M 11.2 8 L 19.1 14.8 L 11.2 21.7 Z" fill="#f5870a"/></svg>
<svg class="a" style="left:524px;top:381px;" width="26" height="32" viewBox="0 0 26 32"><path d="M 1.5 2 L 17 2 L 24.5 9.5 L 24.5 29.5 C 24.5 30, 24 30.5, 23.5 30.5 L 2.5 30.5 C 2 30.5, 1.5 30, 1.5 29.5 Z" fill="none" stroke="#338ecc" stroke-width="2.6" stroke-linejoin="round"/>
<path d="M 17 2 L 17 9.5 L 24.5 9.5 Z" fill="#338ecc"/>
<path d="M 6.5 17 L 14 17" stroke="#338ecc" stroke-width="2.4"/><path d="M 12.5 12.5 L 18.5 17 L 12.5 21.5 Z" fill="#338ecc"/></svg>
<svg class="a" style="left:520px;top:702px;" width="31" height="32" viewBox="0 0 31 32"><path d="M 7.1 20.7 L 7.1 4 C 7.1 2.9, 7.9 2.2, 9 2.2 L 25 2.2 L 25 28.6 C 25 29.9, 24 30.9, 22.7 30.9 L 16 30.9" fill="none" stroke="#338ecc" stroke-width="2.6" stroke-linejoin="round"/>
<rect x="24" y="1" width="6" height="6.6" fill="#338ecc"/><rect x="0.3" y="26" width="17.4" height="5.6" fill="#338ecc"/></svg>
<svg class="a" style="left:521px;top:768px;" width="30" height="30" viewBox="0 0 30 30"><g fill="#338ecc"><rect x="1.1" y="0.2" width="11.7" height="3.5"/><rect x="1.1" y="8" width="27.6" height="3.8"/>
<path d="M 5.5 16.1 L 22.9 16.1 L 22.9 19.6 L 7.5 19.6 Z"/><path d="M 7.5 24 L 26.9 24 L 26.9 27.8 L 5.5 27.8 Z"/></g>
<path d="M 1.1 16.4 L 7.2 22 L 1.1 27.8 Z" fill="#4bab34"/></svg>
<svg class="a" style="left:521px;top:832px;" width="31" height="30" viewBox="0 0 31 30"><path d="M 1.3 2 C 1.3 1.4, 1.7 1.2, 2.2 1.2 L 13 1.2 L 15.2 4.2 L 28.8 4.2 C 29.3 4.2, 29.7 4.6, 29.7 5.1 L 29.7 24.9 L 1.3 24.9 Z" fill="#8fcbeb" stroke="#338ecc" stroke-width="2" stroke-linejoin="round"/>
<circle cx="21.5" cy="19.3" r="11.4" fill="#fff"/><path d="M 18.9 14.9 L 24 14.9 L 24 20.2 L 18.9 20.2 Z M 13.8 20 L 29 20 L 21.5 28 Z" fill="#338ecc"/></svg>
<svg class="a" style="left:521px;top:896px;" width="31" height="30" viewBox="0 0 31 30"><path d="M 1.3 2 C 1.3 1.4, 1.7 1.2, 2.2 1.2 L 13 1.2 L 15.2 4.2 L 28.8 4.2 C 29.3 4.2, 29.7 4.6, 29.7 5.1 L 29.7 24.9 L 1.3 24.9 Z" fill="#8fcbeb" stroke="#338ecc" stroke-width="2" stroke-linejoin="round"/>
<circle cx="21.5" cy="20.6" r="11.4" fill="#fff"/><path d="M 18.9 20.6 L 24 20.6 L 24 25.7 L 18.9 25.7 Z M 13.8 20.6 L 29 20.6 L 21.5 12.7 Z" fill="#338ecc"/></svg>
<div class="a" style="left:504px;top:942px;width:1830px;height:80px;background:#dedede;"></div>
<div class="a" style="left:766px;top:946px;width:277px;height:4px;background:#e6394f;"></div>
<div class="a" style="left:766px;top:950px;width:277px;height:72px;background:#ffffff;"></div>
<svg class="a" style="left:521px;top:972px;" width="31" height="28" viewBox="0 0 31 28"><rect x="1" y="2" width="28.4" height="23.7" rx="1.5" fill="none" stroke="#1f7fc8" stroke-width="2"/>
<path d="M 1 7.9 L 29.4 7.9 M 1 14 L 29.4 14 M 1 20 L 29.4 20 M 9.9 2 L 9.9 25.7" stroke="#1f7fc8" stroke-width="2"/></svg>
<svg class="a" style="left:783px;top:972px;" width="31" height="28" viewBox="0 0 31 28"><rect x="1" y="2" width="28.4" height="23.7" rx="1.5" fill="none" stroke="#1f7fc8" stroke-width="2"/>
<path d="M 1 7.9 L 29.4 7.9 M 1 14 L 29.4 14 M 1 20 L 29.4 20 M 9.9 2 L 9.9 25.7" stroke="#1f7fc8" stroke-width="2"/></svg>
<svg class="a" style="left:1019px;top:956px;" width="16" height="16" viewBox="0 0 16 16"><path d="M 2 2 L 14 14 M 14 2 L 2 14" stroke="#666" stroke-width="2"/></svg>
<svg class="a" style="left:1018px;top:1004px;" width="18" height="4" viewBox="0 0 18 4"><g fill="#333"><circle cx="2.2" cy="2" r="1.9"/><circle cx="9" cy="2" r="1.9"/><circle cx="15.8" cy="2" r="1.9"/></g></svg>
<div class="a" style="left:504px;top:1022px;width:1830px;height:698px;background:#f1f1f1;"></div>
<div class="a" style="left:520px;top:1042px;width:1670px;height:48px;background:#ffffff;box-sizing:border-box;border:2px solid #dddddd"></div>
<div class="a" style="left:2138px;top:1042px;width:2px;height:48px;background:#dddddd;"></div>
<svg class="a" style="left:2147px;top:1054px;" width="34" height="25" viewBox="0 0 34 25"><path d="M 3.5 9.8 L 13.6 19.8 L 31 3" fill="none" stroke="#a3d59b" stroke-width="5"/></svg>
<svg class="a" style="left:2202px;top:1050px;" width="32" height="32" viewBox="0 0 32 32"><g transform="translate(15.7 15.4) rotate(45)"><rect x="-5.75" y="-11.1" width="11.5" height="22.2" rx="2" fill="none" stroke="#92c1e0" stroke-width="2.8"/>
<rect x="-7.15" y="-12.5" width="14.3" height="13.5" rx="2.5" fill="#92c1e0"/></g><rect x="20" y="27" width="10" height="2.2" fill="#92c1e0"/></svg>
<div class="a" style="left:520px;top:1110px;width:1692px;height:512px;background:#ffffff;border-top-left-radius:8px"></div>
<div class="a" style="left:638px;top:1110px;width:2px;height:512px;background:#dddddd;"></div>
<div class="a" style="left:827px;top:1110px;width:2px;height:512px;background:#dddddd;"></div>
<div class="a" style="left:1058px;top:1110px;width:2px;height:512px;background:#dddddd;"></div>
<div class="a" style="left:1308px;top:1110px;width:2px;height:512px;background:#dddddd;"></div>
<div class="a" style="left:1557px;top:1110px;width:2px;height:512px;background:#dddddd;"></div>
<div class="a" style="left:1788px;top:1110px;width:2px;height:512px;background:#dddddd;"></div>
<div class="a" style="left:2023px;top:1110px;width:2px;height:512px;background:#dddddd;"></div>
<div class="a" style="left:520px;top:1164px;width:1692px;height:2px;background:#dddddd;"></div>
<div class="a" style="left:520px;top:1214px;width:1692px;height:2px;background:#dddddd;"></div>
<div class="a" style="left:520px;top:1264px;width:1692px;height:2px;background:#dddddd;"></div>
<div class="a" style="left:520px;top:1314px;width:1692px;height:2px;background:#dddddd;"></div>
<div class="a" style="left:520px;top:1364px;width:1692px;height:2px;background:#dddddd;"></div>
<div class="a" style="left:520px;top:1414px;width:1692px;height:2px;background:#dddddd;"></div>
<div class="a" style="left:520px;top:1464px;width:1692px;height:2px;background:#dddddd;"></div>
<div class="a" style="left:520px;top:1514px;width:1692px;height:2px;background:#dddddd;"></div>
<div class="a" style="left:520px;top:1564px;width:1692px;height:2px;background:#dddddd;"></div>
<div class="a" style="left:520px;top:1614px;width:1692px;height:2px;background:#dddddd;"></div>
<svg class="a" style="left:605px;top:1128px;" width="15" height="18" viewBox="0 0 15 18"><path d="M 3.5 8 L 3.5 5.5 C 3.5 2.5, 5 1, 7.5 1 C 10 1, 11.5 2.5, 11.5 5.5 L 11.5 8" fill="none" stroke="#fbb710" stroke-width="2.2"/><rect x="1" y="8" width="13" height="9.5" rx="1" fill="#fbb710"/></svg>
<svg class="a" style="left:781px;top:1126px;" width="28" height="25" viewBox="0 0 28 25"><g fill="#c4c4c4"><rect x="4.4" y="0" width="5.2" height="16"/><path d="M 0.3 15.3 L 13.7 15.3 L 7 24 Z"/>
<rect x="18.5" y="8.5" width="5.2" height="15.8"/><path d="M 14.2 9.2 L 27.8 9.2 L 21 0.3 Z"/></g></svg>
<svg class="a" style="left:844.5px;top:1130px;" width="34" height="13" viewBox="0 0 34 13"><g fill="none" stroke="#338ecc" stroke-width="2.9" stroke-linejoin="miter">
<path d="M 1.45 13 L 1.45 4.3 L 4.3 1.45 L 8.3 1.45 L 8.3 13 M 1.45 7.6 L 8.3 7.6"/>
<path d="M 12.3 0 L 12.3 13 M 12.3 1.45 L 17.7 1.45 L 19.2 2.9 L 19.2 5.4 L 17.7 6.9 L 12.3 6.9 M 17.7 6.9 L 19.6 8.6 L 19.6 10 L 18.1 11.55 L 12.3 11.55"/>
<path d="M 32.6 1.45 L 26.1 1.45 L 23.7 3.8 L 23.7 9.2 L 26.1 11.55 L 32.6 11.55"/>
</g></svg>
<svg class="a" style="left:1012px;top:1126px;" width="28" height="25" viewBox="0 0 28 25"><g fill="#c4c4c4"><rect x="4.4" y="0" width="5.2" height="16"/><path d="M 0.3 15.3 L 13.7 15.3 L 7 24 Z"/>
<rect x="18.5" y="8.5" width="5.2" height="15.8"/><path d="M 14.2 9.2 L 27.8 9.2 L 21 0.3 Z"/></g></svg>
<svg class="a" style="left:1262px;top:1126px;" width="28" height="25" viewBox="0 0 28 25"><g fill="#c4c4c4"><rect x="4.4" y="0" width="5.2" height="16"/><path d="M 0.3 15.3 L 13.7 15.3 L 7 24 Z"/>
<rect x="18.5" y="8.5" width="5.2" height="15.8"/><path d="M 14.2 9.2 L 27.8 9.2 L 21 0.3 Z"/></g></svg>
<svg class="a" style="left:1511.5px;top:1126px;" width="28" height="25" viewBox="0 0 28 25"><g fill="#c4c4c4"><rect x="4.4" y="0" width="5.2" height="16"/><path d="M 0.3 15.3 L 13.7 15.3 L 7 24 Z"/>
<rect x="18.5" y="8.5" width="5.2" height="15.8"/><path d="M 14.2 9.2 L 27.8 9.2 L 21 0.3 Z"/></g></svg>
<svg class="a" style="left:1742px;top:1126px;" width="28" height="25" viewBox="0 0 28 25"><g fill="#c4c4c4"><rect x="4.4" y="0" width="5.2" height="16"/><path d="M 0.3 15.3 L 13.7 15.3 L 7 24 Z"/>
<rect x="18.5" y="8.5" width="5.2" height="15.8"/><path d="M 14.2 9.2 L 27.8 9.2 L 21 0.3 Z"/></g></svg>
<svg class="a" style="left:1805.1px;top:1130px;" width="34" height="13" viewBox="0 0 34 13"><g fill="none" stroke="#338ecc" stroke-width="2.9" stroke-linejoin="miter">
<path d="M 1.45 13 L 1.45 4.3 L 4.3 1.45 L 8.3 1.45 L 8.3 13 M 1.45 7.6 L 8.3 7.6"/>
<path d="M 12.3 0 L 12.3 13 M 12.3 1.45 L 17.7 1.45 L 19.2 2.9 L 19.2 5.4 L 17.7 6.9 L 12.3 6.9 M 17.7 6.9 L 19.6 8.6 L 19.6 10 L 18.1 11.55 L 12.3 11.55"/>
<path d="M 32.6 1.45 L 26.1 1.45 L 23.7 3.8 L 23.7 9.2 L 26.1 11.55 L 32.6 11.55"/>
</g></svg>
<svg class="a" style="left:1977px;top:1126px;" width="28" height="25" viewBox="0 0 28 25"><g fill="#c4c4c4"><rect x="4.4" y="0" width="5.2" height="16"/><path d="M 0.3 15.3 L 13.7 15.3 L 7 24 Z"/>
<rect x="18.5" y="8.5" width="5.2" height="15.8"/><path d="M 14.2 9.2 L 27.8 9.2 L 21 0.3 Z"/></g></svg>
<svg class="a" style="left:2040.1px;top:1130px;" width="34" height="13" viewBox="0 0 34 13"><g fill="none" stroke="#338ecc" stroke-width="2.9" stroke-linejoin="miter">
<path d="M 1.45 13 L 1.45 4.3 L 4.3 1.45 L 8.3 1.45 L 8.3 13 M 1.45 7.6 L 8.3 7.6"/>
<path d="M 12.3 0 L 12.3 13 M 12.3 1.45 L 17.7 1.45 L 19.2 2.9 L 19.2 5.4 L 17.7 6.9 L 12.3 6.9 M 17.7 6.9 L 19.6 8.6 L 19.6 10 L 18.1 11.55 L 12.3 11.55"/>
<path d="M 32.6 1.45 L 26.1 1.45 L 23.7 3.8 L 23.7 9.2 L 26.1 11.55 L 32.6 11.55"/>
</g></svg>
<div class="layer">
<div class="t" style="left:618.6px;top:35.50px;font-size:28px;color:#ffffff;font-weight:400;font-family:'Liberation Sans';letter-spacing:-0.683px;">OpenGauss@gauss</div>
<div class="t" style="left:1008.6px;top:35.50px;font-size:28px;color:#ffffff;font-weight:400;font-family:'Liberation Sans';letter-spacing:0.156px;">postgres</div>
<div class="t" style="left:1928.6px;top:35.50px;font-size:28px;color:#ffffff;font-weight:400;font-family:'Liberation Sans';letter-spacing:0.535px;">i@tsukino.top</div>
<div class="t" style="left:8px;top:163.53px;font-size:23px;color:#999999;font-weight:400;font-family:'Liberation Sans';letter-spacing:0.666px;">Shared</div>
<div class="t" style="left:89px;top:205.30px;font-size:28px;color:#333333;font-weight:400;font-family:'Liberation Sans';letter-spacing:-0.254px;">OpenGauss@gauss</div>
<div class="t" style="left:105px;top:249.30px;font-size:28px;color:#333333;font-weight:400;font-family:'Liberation Sans';letter-spacing:0.513px;">postgres</div>
<div class="t" style="left:121px;top:293.30px;font-size:28px;color:#333333;font-weight:400;font-family:'Liberation Sans';letter-spacing:0.521px;">blockchain</div>
<div class="t" style="left:121px;top:337.30px;font-size:28px;color:#333333;font-weight:400;font-family:'Liberation Sans';letter-spacing:0.497px;">cloudb</div>
<div class="t" style="left:121px;top:381.30px;font-size:28px;color:#333333;font-weight:400;font-family:'Liberation Sans';letter-spacing:0.550px;">cstore</div>
<div class="t" style="left:121px;top:425.30px;font-size:28px;color:#333333;font-weight:400;font-family:'Liberation Sans';letter-spacing:0.121px;">db4ai</div>
<div class="t" style="left:121px;top:469.30px;font-size:28px;color:#333333;font-weight:400;font-family:'Liberation Sans';letter-spacing:0.065px;">dbe_perf</div>
<div class="t" style="left:121px;top:513.30px;font-size:28px;color:#333333;font-weight:400;font-family:'Liberation Sans';letter-spacing:0.121px;">dbe_pldebugger</div>
<div class="t" style="left:121px;top:557.30px;font-size:28px;color:#333333;font-weight:400;font-family:'Liberation Sans';letter-spacing:0.138px;">dbe_pldeveloper</div>
<div class="t" style="left:121px;top:601.30px;font-size:28px;color:#333333;font-weight:400;font-family:'Liberation Sans';letter-spacing:0.095px;">dbe_sql_util</div>
<div class="t" style="left:121px;top:645.30px;font-size:28px;color:#333333;font-weight:400;font-family:'Liberation Sans';letter-spacing:0.610px;">information_schema</div>
<div class="t" style="left:121px;top:689.30px;font-size:28px;color:#333333;font-weight:400;font-family:'Liberation Sans';letter-spacing:0.698px;">partition_test</div>
<div class="t" style="left:121px;top:733.30px;font-size:28px;color:#333333;font-weight:400;font-family:'Liberation Sans';letter-spacing:0.276px;">pg_catalog</div>
<div class="t" style="left:121px;top:777.30px;font-size:28px;color:#333333;font-weight:400;font-family:'Liberation Sans';letter-spacing:0.079px;">pkg_service</div>
<div class="t" style="left:121px;top:821.30px;font-size:28px;color:#333333;font-weight:400;font-family:'Liberation Sans';letter-spacing:0.606px;">public</div>
<div class="t" style="left:121px;top:865.30px;font-size:28px;color:#333333;font-weight:400;font-family:'Liberation Sans';letter-spacing:0.566px;">snapshot</div>
<div class="t" style="left:121px;top:909.30px;font-size:28px;color:#333333;font-weight:400;font-family:'Liberation Sans';letter-spacing:0.604px;">sqladvisor</div>
<div class="t" style="left:121px;top:953.30px;font-size:28px;color:#333333;font-weight:400;font-family:'Liberation Sans';letter-spacing:0.869px;">starlight</div>
<div class="t" style="left:568px;top:123.37px;font-size:26.5px;color:#1c1c1c;font-weight:400;font-family:'Liberation Sans';letter-spacing:0.478px;-webkit-text-stroke:0.7px #1c1c1c;">sql-1 (OpenGauss@gauss)</div>
<div class="t" style="left:611px;top:190.07px;font-size:26px;color:#333333;font-weight:400;font-family:'Liberation Mono';letter-spacing:0.000px;transform-origin:0 20px;transform:scaleY(1.1);">1</div>
<div class="t" style="left:715.0px;top:190.47px;font-size:26px;color:#0b7cb0;font-weight:700;font-family:'Liberation Mono';letter-spacing:0.000px;letter-spacing:0.23px;transform-origin:0 20px;transform:scaleY(1.1);">SELECT</div>
<div class="t" style="left:825.81px;top:190.47px;font-size:26px;color:#a67f59;font-weight:400;font-family:'Liberation Mono';letter-spacing:0.000px;letter-spacing:0.23px;transform-origin:0 20px;transform:scaleY(1.1);">*</div>
<div class="t" style="left:857.47px;top:190.47px;font-size:26px;color:#0b7cb0;font-weight:700;font-family:'Liberation Mono';letter-spacing:0.000px;letter-spacing:0.23px;transform-origin:0 20px;transform:scaleY(1.1);">FROM</div>
<div class="t" style="left:936.62px;top:190.47px;font-size:26px;color:#333333;font-weight:400;font-family:'Liberation Mono';letter-spacing:0.000px;letter-spacing:0.23px;transform-origin:0 20px;transform:scaleY(1.1);">pg_stat_activity;</div>
<div class="t" style="left:2098px;top:910.98px;font-size:24px;color:#8e8e8e;font-weight:400;font-family:'Liberation Sans';letter-spacing:0.211px;">Ln 1, Col 32, Pos 31</div>
<div class="t" style="left:568px;top:973.30px;font-size:28px;color:#222222;font-weight:400;font-family:'Liberation Sans';letter-spacing:-0.191px;">Statistics - 1</div>
<div class="t" style="left:830px;top:973.30px;font-size:28px;color:#1c1c1c;font-weight:400;font-family:'Liberation Sans';letter-spacing:-0.606px;-webkit-text-stroke:0.75px #1c1c1c;">Result - 1 &lt;1&gt;</div>
<div class="t" style="left:537.8px;top:1052.60px;font-size:28px;color:#888888;font-weight:400;font-family:'Liberation Sans';letter-spacing:0.305px;">Enter a SQL expression to filter results, e.g. column_name=10</div>
<div class="t" style="left:537px;top:1126.68px;font-size:24px;color:#222222;font-weight:700;font-family:'Liberation Sans';letter-spacing:0.000px;">#</div>
<div class="t" style="left:654.8px;top:1126.95px;font-size:20.5px;color:#338ecc;font-weight:700;font-family:'Liberation Sans';letter-spacing:-1.209px;">123</div>
<div class="t" style="left:705px;top:1126.88px;font-size:24px;color:#333333;font-weight:400;font-family:'Liberation Sans';letter-spacing:0.738px;">datid</div>
<div class="t" style="left:893px;top:1126.88px;font-size:24px;color:#333333;font-weight:400;font-family:'Liberation Sans';letter-spacing:0.932px;">datname</div>
<div class="t" style="left:1074.8px;top:1126.95px;font-size:20.5px;color:#338ecc;font-weight:700;font-family:'Liberation Sans';letter-spacing:-1.209px;">123</div>
<div class="t" style="left:1125px;top:1126.88px;font-size:24px;color:#333333;font-weight:400;font-family:'Liberation Sans';letter-spacing:0.334px;">pid</div>
<div class="t" style="left:1323.8px;top:1126.95px;font-size:20.5px;color:#338ecc;font-weight:700;font-family:'Liberation Sans';letter-spacing:-1.209px;">123</div>
<div class="t" style="left:1374px;top:1126.88px;font-size:24px;color:#333333;font-weight:400;font-family:'Liberation Sans';letter-spacing:0.942px;">sessionid</div>
<div class="t" style="left:1573.8px;top:1126.95px;font-size:20.5px;color:#338ecc;font-weight:700;font-family:'Liberation Sans';letter-spacing:-1.209px;">123</div>
<div class="t" style="left:1623px;top:1126.88px;font-size:24px;color:#333333;font-weight:400;font-family:'Liberation Sans';letter-spacing:0.775px;">usesysid</div>
<div class="t" style="left:1855px;top:1126.88px;font-size:24px;color:#333333;font-weight:400;font-family:'Liberation Sans';letter-spacing:0.544px;">usename</div>
<div class="t" style="left:2090px;top:1126.88px;font-size:24px;color:#333333;font-weight:400;font-family:'Liberation Sans';letter-spacing:0.000px;letter-spacing:0.6px">application_name</div>
<div class="t" style="left:537px;top:1180.18px;font-size:24px;color:#333333;font-weight:400;font-family:'Liberation Sans';letter-spacing:0.000px;">1</div>
<div class="t" style="left:656px;top:1180.18px;font-size:24px;color:#333333;font-weight:400;font-family:'Liberation Sans';letter-spacing:0.000px;letter-spacing:0.98px">14726</div>
<div class="t" style="left:845px;top:1180.18px;font-size:24px;color:#333333;font-weight:400;font-family:'Liberation Sans';letter-spacing:0.000px;letter-spacing:0.85px">postgres</div>
<div class="t" style="left:1076px;top:1180.18px;font-size:24px;color:#333333;font-weight:400;font-family:'Liberation Sans';letter-spacing:0.000px;letter-spacing:0.98px">140140424984128</div>
<div class="t" style="left:1325px;top:1180.18px;font-size:24px;color:#333333;font-weight:400;font-family:'Liberation Sans';letter-spacing:0.000px;letter-spacing:0.98px">140140424984128</div>
<div class="t" style="left:1575px;top:1180.18px;font-size:24px;color:#333333;font-weight:400;font-family:'Liberation Sans';letter-spacing:0.000px;letter-spacing:0.98px">16385</div>
<div class="t" style="left:1806.6px;top:1180.18px;font-size:24px;color:#333333;font-weight:400;font-family:'Liberation Sans';letter-spacing:0.000px;letter-spacing:0.85px">cloudb</div>
<div class="t" style="left:2042.6px;top:1180.18px;font-size:24px;color:#333333;font-weight:400;font-family:'Liberation Sans';letter-spacing:0.000px;letter-spacing:0.85px">PostgreSQL JDBC Driver</div>
<div class="t" style="left:537px;top:1230.18px;font-size:24px;color:#333333;font-weight:400;font-family:'Liberation Sans';letter-spacing:0.000px;">2</div>
<div class="t" style="left:656px;top:1230.18px;font-size:24px;color:#333333;font-weight:400;font-family:'Liberation Sans';letter-spacing:0.000px;letter-spacing:0.98px">14726</div>
<div class="t" style="left:845px;top:1230.18px;font-size:24px;color:#333333;font-weight:400;font-family:'Liberation Sans';letter-spacing:0.000px;letter-spacing:0.85px">postgres</div>
<div class="t" style="left:1076px;top:1230.18px;font-size:24px;color:#333333;font-weight:400;font-family:'Liberation Sans';letter-spacing:0.000px;letter-spacing:0.98px">140140479510080</div>
<div class="t" style="left:1325px;top:1230.18px;font-size:24px;color:#333333;font-weight:400;font-family:'Liberation Sans';letter-spacing:0.000px;letter-spacing:0.98px">140140479510080</div>
<div class="t" style="left:1575px;top:1230.18px;font-size:24px;color:#333333;font-weight:400;font-family:'Liberation Sans';letter-spacing:0.000px;letter-spacing:0.98px">16385</div>
<div class="t" style="left:1806.6px;top:1230.18px;font-size:24px;color:#333333;font-weight:400;font-family:'Liberation Sans';letter-spacing:0.000px;letter-spacing:0.85px">cloudb</div>
<div class="t" style="left:2042.6px;top:1230.18px;font-size:24px;color:#333333;font-weight:400;font-family:'Liberation Sans';letter-spacing:0.000px;letter-spacing:0.85px">PostgreSQL JDBC Driver</div>
<div class="t" style="left:537px;top:1280.18px;font-size:24px;color:#333333;font-weight:400;font-family:'Liberation Sans';letter-spacing:0.000px;">3</div>
<div class="t" style="left:656px;top:1280.18px;font-size:24px;color:#333333;font-weight:400;font-family:'Liberation Sans';letter-spacing:0.000px;letter-spacing:0.98px">14726</div>
<div class="t" style="left:845px;top:1280.18px;font-size:24px;color:#333333;font-weight:400;font-family:'Liberation Sans';letter-spacing:0.000px;letter-spacing:0.85px">postgres</div>
<div class="t" style="left:1076px;top:1280.18px;font-size:24px;color:#333333;font-weight:400;font-family:'Liberation Sans';letter-spacing:0.000px;letter-spacing:0.98px">140140521453120</div>
<div class="t" style="left:1325px;top:1280.18px;font-size:24px;color:#333333;font-weight:400;font-family:'Liberation Sans';letter-spacing:0.000px;letter-spacing:0.98px">140140521453120</div>
<div class="t" style="left:1575px;top:1280.18px;font-size:24px;color:#333333;font-weight:400;font-family:'Liberation Sans';letter-spacing:0.000px;letter-spacing:0.98px">16385</div>
<div class="t" style="left:1806.6px;top:1280.18px;font-size:24px;color:#333333;font-weight:400;font-family:'Liberation Sans';letter-spacing:0.000px;letter-spacing:0.85px">cloudb</div>
<div class="t" style="left:2042.6px;top:1280.18px;font-size:24px;color:#333333;font-weight:400;font-family:'Liberation Sans';letter-spacing:0.000px;letter-spacing:0.85px">PostgreSQL JDBC Driver</div>
<div class="t" style="left:537px;top:1330.18px;font-size:24px;color:#333333;font-weight:400;font-family:'Liberation Sans';letter-spacing:0.000px;">4</div>
<div class="t" style="left:656px;top:1330.18px;font-size:24px;color:#333333;font-weight:400;font-family:'Liberation Sans';letter-spacing:0.000px;letter-spacing:0.98px">14726</div>
<div class="t" style="left:845px;top:1330.18px;font-size:24px;color:#333333;font-weight:400;font-family:'Liberation Sans';letter-spacing:0.000px;letter-spacing:0.85px">postgres</div>
<div class="t" style="left:1076px;top:1330.18px;font-size:24px;color:#333333;font-weight:400;font-family:'Liberation Sans';letter-spacing:0.000px;letter-spacing:0.98px">140140562347584</div>
<div class="t" style="left:1325px;top:1330.18px;font-size:24px;color:#333333;font-weight:400;font-family:'Liberation Sans';letter-spacing:0.000px;letter-spacing:0.98px">140140562347584</div>
<div class="t" style="left:1575px;top:1330.18px;font-size:24px;color:#333333;font-weight:400;font-family:'Liberation Sans';letter-spacing:0.000px;letter-spacing:0.98px">16385</div>
<div class="t" style="left:1806.6px;top:1330.18px;font-size:24px;color:#333333;font-weight:400;font-family:'Liberation Sans';letter-spacing:0.000px;letter-spacing:0.85px">cloudb</div>
<div class="t" style="left:2042.6px;top:1330.18px;font-size:24px;color:#333333;font-weight:400;font-family:'Liberation Sans';letter-spacing:0.000px;letter-spacing:0.85px">PostgreSQL JDBC Driver</div>
<div class="t" style="left:537px;top:1380.18px;font-size:24px;color:#333333;font-weight:400;font-family:'Liberation Sans';letter-spacing:0.000px;">5</div>
<div class="t" style="left:656px;top:1380.18px;font-size:24px;color:#333333;font-weight:400;font-family:'Liberation Sans';letter-spacing:0.000px;letter-spacing:0.98px">14726</div>
<div class="t" style="left:845px;top:1380.18px;font-size:24px;color:#333333;font-weight:400;font-family:'Liberation Sans';letter-spacing:0.000px;letter-spacing:0.85px">postgres</div>
<div class="t" style="left:1076px;top:1380.18px;font-size:24px;color:#333333;font-weight:400;font-family:'Liberation Sans';letter-spacing:0.000px;letter-spacing:0.98px">140140677166656</div>
<div class="t" style="left:1325px;top:1380.18px;font-size:24px;color:#333333;font-weight:400;font-family:'Liberation Sans';letter-spacing:0.000px;letter-spacing:0.98px">140140677166656</div>
<div class="t" style="left:1575px;top:1380.18px;font-size:24px;color:#333333;font-weight:400;font-family:'Liberation Sans';letter-spacing:0.000px;letter-spacing:0.98px">10</div>
<div class="t" style="left:1806.6px;top:1380.18px;font-size:24px;color:#333333;font-weight:400;font-family:'Liberation Sans';letter-spacing:0.000px;letter-spacing:0.85px">omm</div>
<div class="t" style="left:2042.6px;top:1380.18px;font-size:24px;color:#333333;font-weight:400;font-family:'Liberation Sans';letter-spacing:0.000px;letter-spacing:0.85px">WLMArbiter</div>
<div class="t" style="left:537px;top:1430.18px;font-size:24px;color:#333333;font-weight:400;font-family:'Liberation Sans';letter-spacing:0.000px;">6</div>
<div class="t" style="left:656px;top:1430.18px;font-size:24px;color:#333333;font-weight:400;font-family:'Liberation Sans';letter-spacing:0.000px;letter-spacing:0.98px">14726</div>
<div class="t" style="left:845px;top:1430.18px;font-size:24px;color:#333333;font-weight:400;font-family:'Liberation Sans';letter-spacing:0.000px;letter-spacing:0.85px">postgres</div>
<div class="t" style="left:1076px;top:1430.18px;font-size:24px;color:#333333;font-weight:400;font-family:'Liberation Sans';letter-spacing:0.000px;letter-spacing:0.98px">140140706002496</div>
<div class="t" style="left:1325px;top:1430.18px;font-size:24px;color:#333333;font-weight:400;font-family:'Liberation Sans';letter-spacing:0.000px;letter-spacing:0.98px">140140706002496</div>
<div class="t" style="left:1575px;top:1430.18px;font-size:24px;color:#333333;font-weight:400;font-family:'Liberation Sans';letter-spacing:0.000px;letter-spacing:0.98px">10</div>
<div class="t" style="left:1806.6px;top:1430.18px;font-size:24px;color:#333333;font-weight:400;font-family:'Liberation Sans';letter-spacing:0.000px;letter-spacing:0.85px">omm</div>
<div class="t" style="left:2042.6px;top:1430.18px;font-size:24px;color:#333333;font-weight:400;font-family:'Liberation Sans';letter-spacing:0.000px;letter-spacing:0.85px">WorkloadMonitor</div>
<div class="t" style="left:537px;top:1480.18px;font-size:24px;color:#333333;font-weight:400;font-family:'Liberation Sans';letter-spacing:0.000px;">7</div>
<div class="t" style="left:656px;top:1480.18px;font-size:24px;color:#333333;font-weight:400;font-family:'Liberation Sans';letter-spacing:0.000px;letter-spacing:0.98px">14726</div>
<div class="t" style="left:845px;top:1480.18px;font-size:24px;color:#333333;font-weight:400;font-family:'Liberation Sans';letter-spacing:0.000px;letter-spacing:0.85px">postgres</div>
<div class="t" style="left:1076px;top:1480.18px;font-size:24px;color:#333333;font-weight:400;font-family:'Liberation Sans';letter-spacing:0.000px;letter-spacing:0.98px">140140731168320</div>
<div class="t" style="left:1325px;top:1480.18px;font-size:24px;color:#333333;font-weight:400;font-family:'Liberation Sans';letter-spacing:0.000px;letter-spacing:0.98px">140140731168320</div>
<div class="t" style="left:1575px;top:1480.18px;font-size:24px;color:#333333;font-weight:400;font-family:'Liberation Sans';letter-spacing:0.000px;letter-spacing:0.98px">10</div>
<div class="t" style="left:1806.6px;top:1480.18px;font-size:24px;color:#333333;font-weight:400;font-family:'Liberation Sans';letter-spacing:0.000px;letter-spacing:0.85px">omm</div>
<div class="t" style="left:2042.6px;top:1480.18px;font-size:24px;color:#333333;font-weight:400;font-family:'Liberation Sans';letter-spacing:0.000px;letter-spacing:0.85px">workload</div>
<div class="t" style="left:537px;top:1530.18px;font-size:24px;color:#333333;font-weight:400;font-family:'Liberation Sans';letter-spacing:0.000px;">8</div>
<div class="t" style="left:656px;top:1530.18px;font-size:24px;color:#333333;font-weight:400;font-family:'Liberation Sans';letter-spacing:0.000px;letter-spacing:0.98px">14726</div>
<div class="t" style="left:845px;top:1530.18px;font-size:24px;color:#333333;font-weight:400;font-family:'Liberation Sans';letter-spacing:0.000px;letter-spacing:0.85px">postgres</div>
<div class="t" style="left:1076px;top:1530.18px;font-size:24px;color:#333333;font-weight:400;font-family:'Liberation Sans';letter-spacing:0.000px;letter-spacing:0.98px">140140903659072</div>
<div class="t" style="left:1325px;top:1530.18px;font-size:24px;color:#333333;font-weight:400;font-family:'Liberation Sans';letter-spacing:0.000px;letter-spacing:0.98px">140140903659072</div>
<div class="t" style="left:1575px;top:1530.18px;font-size:24px;color:#333333;font-weight:400;font-family:'Liberation Sans';letter-spacing:0.000px;letter-spacing:0.98px">10</div>
<div class="t" style="left:1806.6px;top:1530.18px;font-size:24px;color:#333333;font-weight:400;font-family:'Liberation Sans';letter-spacing:0.000px;letter-spacing:0.85px">omm</div>
<div class="t" style="left:2042.6px;top:1530.18px;font-size:24px;color:#333333;font-weight:400;font-family:'Liberation Sans';letter-spacing:0.000px;letter-spacing:0.85px">statement flush thread</div>
<div class="t" style="left:537px;top:1580.18px;font-size:24px;color:#333333;font-weight:400;font-family:'Liberation Sans';letter-spacing:0.000px;">9</div>
<div class="t" style="left:656px;top:1580.18px;font-size:24px;color:#333333;font-weight:400;font-family:'Liberation Sans';letter-spacing:0.000px;letter-spacing:0.98px">14726</div>
<div class="t" style="left:845px;top:1580.18px;font-size:24px;color:#333333;font-weight:400;font-family:'Liberation Sans';letter-spacing:0.000px;letter-spacing:0.85px">postgres</div>
<div class="t" style="left:1076px;top:1580.18px;font-size:24px;color:#333333;font-weight:400;font-family:'Liberation Sans';letter-spacing:0.000px;letter-spacing:0.98px">140141084014144</div>
<div class="t" style="left:1325px;top:1580.18px;font-size:24px;color:#333333;font-weight:400;font-family:'Liberation Sans';letter-spacing:0.000px;letter-spacing:0.98px">140141084014144</div>
<div class="t" style="left:1575px;top:1580.18px;font-size:24px;color:#333333;font-weight:400;font-family:'Liberation Sans';letter-spacing:0.000px;letter-spacing:0.98px">10</div>
<div class="t" style="left:1806.6px;top:1580.18px;font-size:24px;color:#333333;font-weight:400;font-family:'Liberation Sans';letter-spacing:0.000px;letter-spacing:0.85px">omm</div>
<div class="t" style="left:2042.6px;top:1580.18px;font-size:24px;color:#333333;font-weight:400;font-family:'Liberation Sans';letter-spacing:0.000px;letter-spacing:0.85px">PercentileJob</div>
<div class="t" style="left:537px;top:1630.18px;font-size:24px;color:#333333;font-weight:400;font-family:'Liberation Sans';letter-spacing:0.000px;">10</div>
<div class="t" style="left:656px;top:1630.18px;font-size:24px;color:#333333;font-weight:400;font-family:'Liberation Sans';letter-spacing:0.000px;letter-spacing:0.98px">14726</div>
<div class="t" style="left:845px;top:1630.18px;font-size:24px;color:#333333;font-weight:400;font-family:'Liberation Sans';letter-spacing:0.000px;letter-spacing:0.85px">postgres</div>
<div class="t" style="left:1076px;top:1630.18px;font-size:24px;color:#333333;font-weight:400;font-family:'Liberation Sans';letter-spacing:0.000px;letter-spacing:0.98px">140141084014145</div>
<div class="t" style="left:1325px;top:1630.18px;font-size:24px;color:#333333;font-weight:400;font-family:'Liberation Sans';letter-spacing:0.000px;letter-spacing:0.98px">140141084014145</div>
<div class="t" style="left:1575px;top:1630.18px;font-size:24px;color:#333333;font-weight:400;font-family:'Liberation Sans';letter-spacing:0.000px;letter-spacing:0.98px">10</div>
<div class="t" style="left:1806.6px;top:1630.18px;font-size:24px;color:#333333;font-weight:400;font-family:'Liberation Sans';letter-spacing:0.000px;letter-spacing:0.85px">omm</div>
<div class="t" style="left:2042.6px;top:1630.18px;font-size:24px;color:#333333;font-weight:400;font-family:'Liberation Sans';letter-spacing:0.000px;letter-spacing:0.85px">Asp</div>
</div>
<div class="a" style="left:2212px;top:1110px;width:122px;height:512px;background:#f1f1f1;"></div>
<div class="a" style="left:504px;top:1622px;width:1830px;height:98px;background:#f1f1f1;"></div>
<div class="a" style="left:2212px;top:1110px;width:34px;height:512px;background:#f5f5f5;border-top-right-radius:8px"></div>
<div class="a" style="left:2212px;top:1144px;width:34px;height:282px;background:#c8c8c8;"></div>
<svg class="a" style="left:2220px;top:1119px;" width="18" height="14" viewBox="0 0 18 14"><path d="M 2 12 L 9 4 L 16 12" fill="none" stroke="#666" stroke-width="3.5"/></svg>
<svg class="a" style="left:2220px;top:1599px;" width="18" height="14" viewBox="0 0 18 14"><path d="M 2 2 L 9 10 L 16 2" fill="none" stroke="#666" stroke-width="3.5"/></svg>
<div class="a" style="left:520px;top:1622px;width:1726px;height:34px;background:#efefef;border-bottom-left-radius:8px;border-bottom-right-radius:8px"></div>
<div class="a" style="left:554px;top:1622px;width:338px;height:34px;background:#c8c8c8;"></div>
<svg class="a" style="left:529px;top:1630px;" width="15" height="18" viewBox="0 0 15 18"><path d="M 12 2 L 4 9 L 12 16" fill="none" stroke="#666" stroke-width="3.5"/></svg>
<svg class="a" style="left:2188px;top:1630px;" width="15" height="18" viewBox="0 0 15 18"><path d="M 3 2 L 11 9 L 3 16" fill="none" stroke="#666" stroke-width="3.5"/></svg>
<svg class="a" style="left:2272px;top:1224px;" width="26" height="26" viewBox="0 0 26 26"><rect x="6.5" y="0" width="8.5" height="8" fill="#ffffff"/><rect x="17" y="10.8" width="8.5" height="13" fill="#ffffff"/><rect x="1" y="7.2" width="5.2" height="16.9" fill="#338ecc"/><rect x="6.2" y="8" width="10.8" height="16.1" fill="#8cc7eb"/><rect x="6.2" y="8" width="10.8" height="1.5" fill="#5aa3d6"/><rect x="16" y="8" width="1" height="16.1" fill="#338ecc"/></svg>
<svg class="a" style="left:2270px;top:1438px;" width="31" height="31" viewBox="0 0 31 31"><circle cx="15.5" cy="15.5" r="13.5" fill="none" stroke="#338ecc" stroke-width="2.2"/><g fill="#338ecc"><circle cx="10.5" cy="10.5" r="2"/><circle cx="20.5" cy="10.5" r="2"/><circle cx="10.5" cy="20.5" r="2"/><circle cx="20.5" cy="20.5" r="2"/></g></svg>
<svg class="a" style="left:536px;top:1672px;" width="34" height="32" viewBox="0 0 34 32"><path d="M 28.2 22.4 A 13.5 13.5 0 1 0 14.2 29" fill="none" stroke="#666" stroke-width="3"/><path d="M 31.5 17 L 31.5 24.5 L 24 24.5" fill="none" stroke="#666" stroke-width="3"/></svg>
<svg class="a" style="left:574px;top:1682px;" width="18" height="12" viewBox="0 0 18 12"><path d="M 2.5 2.5 L 8.5 8.5 L 14.5 2.5" fill="none" stroke="#666" stroke-width="3.6"/></svg>
<div class="a" style="left:620px;top:1662px;width:160px;height:52px;background:#ffffff;box-sizing:border-box;border:4px solid #d9d9d9;border-radius:7px"></div>
<div class="a" style="left:726px;top:1670px;width:36px;height:36px;background:#e6e6ea;"></div>
<svg class="a" style="left:735px;top:1674px;" width="18" height="28" viewBox="0 0 18 28"><path d="M 2.5 9.5 L 9 3 L 15.5 9.5 M 2.5 18.5 L 9 25 L 15.5 18.5" fill="none" stroke="#8a8a98" stroke-width="2.6"/></svg>
<svg class="a" style="left:803px;top:1673px;" width="34" height="31" viewBox="0 0 34 31"><path d="M 3.5 19 L 3.5 27.5 L 30.5 27.5 L 30.5 19" fill="none" stroke="#338ecc" stroke-width="3.4"/><path d="M 2 3 C 9 3, 14 5, 17 10.5 C 20 5, 25 3, 32 3" fill="none" stroke="#338ecc" stroke-width="3.2"/><path d="M 12.5 10.5 L 17 17 L 21.5 10.5 Z" fill="#338ecc"/></svg>
<svg class="a" style="left:907px;top:1675px;" width="26" height="26" viewBox="0 0 26 26"><path d="M 1 2.5 L 25 2.5" stroke="#338ecc" stroke-width="3"/><path d="M 13 24.5 L 13 10" stroke="#338ecc" stroke-width="2.8"/><path d="M 7.5 15.5 L 13 9.5 L 18.5 15.5" fill="none" stroke="#338ecc" stroke-width="2.8"/></svg>
<div class="layer">
<div class="t" style="left:0px;top:-23.70px;font-size:28px;color:#2a2a2a;font-weight:400;font-family:'Liberation Sans';letter-spacing:-1.188px;transform-origin:0 0;transform:translate(2296.8px,1231px) rotate(-90deg) translate(0,-23.7px)">VALUE</div>
<div class="t" style="left:0px;top:-23.70px;font-size:28px;color:#2a2a2a;font-weight:400;font-family:'Liberation Sans';letter-spacing:-1.996px;transform-origin:0 0;transform:translate(2296.8px,1447.5px) rotate(-90deg) translate(0,-23.7px)">GROUPING</div>
<div class="t" style="left:638px;top:1675.29px;font-size:26px;color:#222222;font-weight:400;font-family:'Liberation Sans';letter-spacing:-0.445px;">200</div>
<div class="t" style="left:845px;top:1675.84px;font-size:25px;color:#666666;font-weight:700;font-family:'Liberation Sans';letter-spacing:0.000px;transform-origin:0 0;transform:scaleX(0.9348);">14</div>
<div class="t" style="left:943px;top:1675.84px;font-size:25px;color:#666666;font-weight:700;font-family:'Liberation Sans';letter-spacing:0.000px;transform-origin:0 0;transform:scaleX(0.8852);">EXPORT</div>
<div class="t" style="left:2107px;top:1675.84px;font-size:25px;color:#888888;font-weight:400;font-family:'Liberation Sans';letter-spacing:-0.026px;">Success - 61ms</div>
</div>
</body></html>
